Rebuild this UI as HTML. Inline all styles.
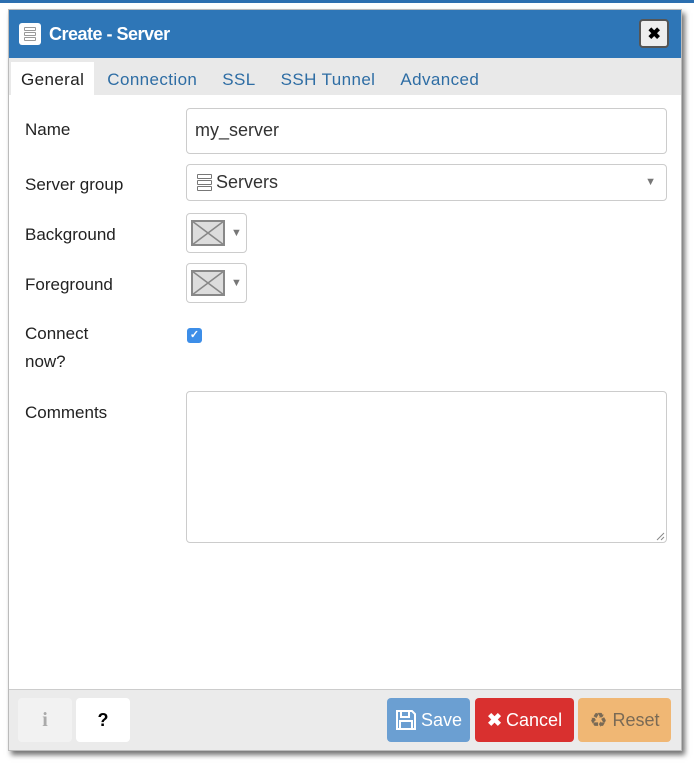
<!DOCTYPE html>
<html><head><style>
*{box-sizing:border-box;margin:0;padding:0}
body{width:694px;height:766px;background:#fff;font-family:"Liberation Sans",sans-serif;position:relative;overflow:hidden}
.topline{position:absolute;left:0;top:0;width:694px;height:3px;background:#2c6fb0}
.dlg{position:absolute;left:8px;top:9px;width:674px;height:742px;background:#fff;border:1px solid #bbb;box-shadow:3px 4px 5px rgba(0,0,0,.55)}
.hdr{height:48px;background:#2e76b7;color:#fff;font-size:18px;font-weight:bold;letter-spacing:-.5px;display:flex;align-items:center;padding-left:10px}
.hicon{width:22px;height:22px;background:#fff;border-radius:3px;margin-right:8px;display:flex;flex-direction:column;justify-content:center;align-items:center;gap:1px}
.hicon i{display:block;width:12px;height:4px;border:1px solid #999;border-radius:1px}
.close{position:absolute;right:12px;top:9px;width:30px;height:29px;background:#eee;border:2px solid #555;border-radius:4px;color:#000;font-size:16px;display:flex;align-items:center;justify-content:center}
.tabs{height:37px;background:#e9e9e9;display:flex;align-items:flex-end;padding-left:2px}
.tab{font-size:17px;letter-spacing:.4px;color:#2e6da4;padding:0 12px 0 13px;height:33px;line-height:36px}
.tab.a{background:#fff;color:#222;padding:0 10px}
.lbl{position:absolute;left:16px;font-size:17px;color:#222;line-height:28px}
.inp{position:absolute;left:177px;border:1px solid #ccc;border-radius:4px;background:#fff}
.ftr{position:absolute;left:0;bottom:0;width:672px;height:61px;background:#ebebeb;border-top:1px solid #ccc}
.btn{position:absolute;top:8px;height:44px;border-radius:4px;font-size:18px;display:flex;align-items:center;justify-content:center}
.cp{display:flex;align-items:center;justify-content:center;width:61px;height:40px}
</style></head><body>
<div class="topline"></div>
<div class="dlg">
 <div class="hdr"><div class="hicon"><i></i><i></i><i></i></div>Create - Server
  <div class="close">✖</div></div>
 <div class="tabs"><div class="tab a">General</div><div class="tab">Connection</div><div class="tab">SSL</div><div class="tab">SSH Tunnel</div><div class="tab">Advanced</div></div>
 <div class="lbl" style="top:106px">Name</div>
 <div class="inp" style="top:98px;width:481px;height:46px;font-size:18px;color:#333;padding:11px 8px">my_server</div>
 <div class="lbl" style="top:161px">Server group</div>
 <div class="inp" style="top:154px;width:481px;height:37px;font-size:18px;color:#333;padding:6px 10px;display:flex;align-items:center">
  <span style="display:inline-flex;flex-direction:column;gap:1px;margin-right:4px"><i style="display:block;width:15px;height:5px;border:1px solid #777;border-radius:1px"></i><i style="display:block;width:15px;height:5px;border:1px solid #777;border-radius:1px"></i><i style="display:block;width:15px;height:5px;border:1px solid #777;border-radius:1px"></i></span>Servers
  <span style="position:absolute;right:10px;top:11px;font-size:11px;color:#777">▼</span></div>
 <div class="lbl" style="top:211px">Background</div>
 <div class="inp cp" style="top:203px"><svg width="34" height="26"><rect x="1" y="1" width="32" height="24" fill="#ddd" stroke="#888" stroke-width="2"/><path d="M1 1L33 25M33 1L1 25" stroke="#888" stroke-width="1.5"/></svg><span style="font-size:11px;color:#777;margin-left:6px">▼</span></div>
 <div class="lbl" style="top:261px">Foreground</div>
 <div class="inp cp" style="top:253px"><svg width="34" height="26"><rect x="1" y="1" width="32" height="24" fill="#ddd" stroke="#888" stroke-width="2"/><path d="M1 1L33 25M33 1L1 25" stroke="#888" stroke-width="1.5"/></svg><span style="font-size:11px;color:#777;margin-left:6px">▼</span></div>
 <div class="lbl" style="top:310px">Connect<br>now?</div>
 <div style="position:absolute;left:178px;top:318px;width:15px;height:15px;background:#3d8ee8;border-radius:3px;color:#fff;font-size:11px;text-align:center;line-height:15px;font-weight:bold">✓</div>
 <div class="lbl" style="top:389px">Comments</div>
 <div class="inp" style="top:381px;width:481px;height:152px"><svg style="position:absolute;right:1px;bottom:1px" width="9" height="9"><path d="M8 1L1 8M8 5L5 8" stroke="#888"/></svg></div>
 <div class="ftr">
  <div class="btn" style="left:9px;width:54px;background:#f2f2f2;color:#aaa;font-family:'Liberation Serif',serif;font-weight:bold;font-size:20px">i</div>
  <div class="btn" style="left:67px;width:54px;background:#fff;color:#000;font-weight:bold">?</div>
  <div class="btn" style="left:378px;width:83px;background:#6b9fd2;color:#fff"><svg width="22" height="22" style="margin-right:4px" viewBox="0 0 22 22"><path d="M2 2h15l3 3v15H2z" fill="none" stroke="#fff" stroke-width="2"/><rect x="6" y="2" width="8" height="6" fill="none" stroke="#fff" stroke-width="2"/><rect x="5" y="12" width="12" height="8" fill="none" stroke="#fff" stroke-width="2"/></svg>Save</div>
  <div class="btn" style="left:466px;width:99px;background:#d9302f;color:#fff"><b style="margin-right:4px">✖</b>Cancel</div>
  <div class="btn" style="left:569px;width:93px;background:#f0b774;color:#7a6a55"><span style="margin-right:5px;font-size:20px">♻</span>Reset</div>
 </div>
</div>
</body></html>
